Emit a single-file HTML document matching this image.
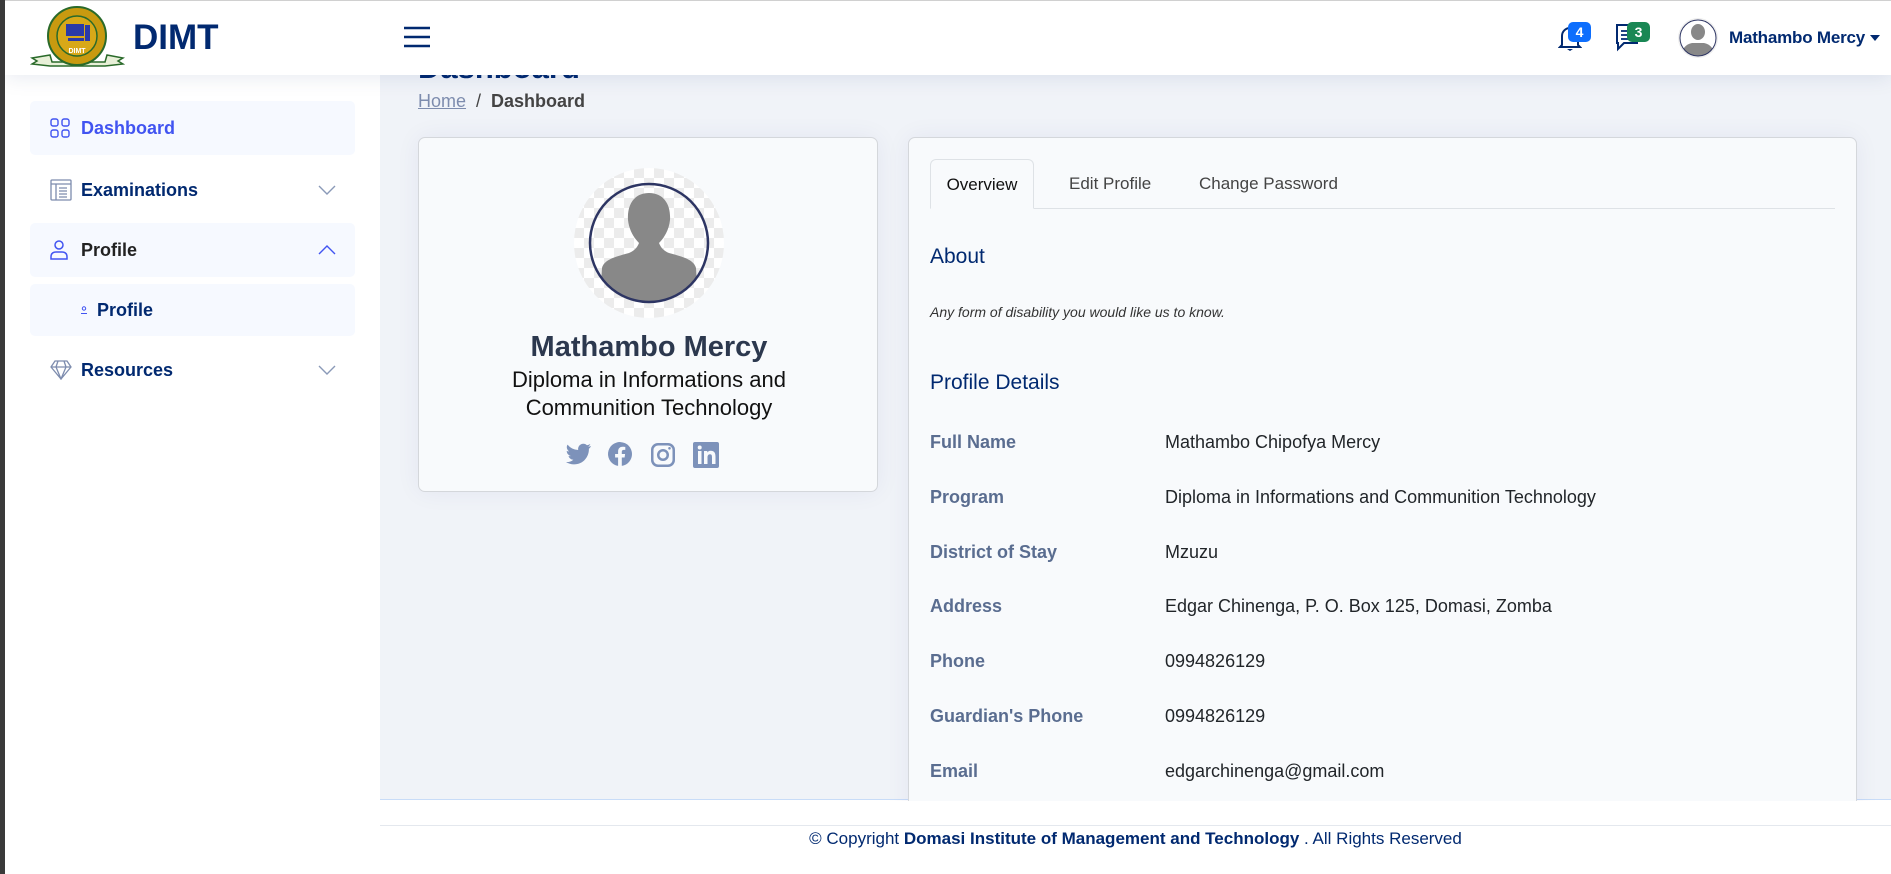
<!DOCTYPE html>
<html><head><meta charset="utf-8"><style>
*{box-sizing:border-box;margin:0;padding:0}
body{width:1891px;height:874px;overflow:hidden;background:#fff;font-family:"Liberation Sans",sans-serif;position:relative}
.edge{position:absolute;left:0;top:0;width:5px;height:874px;background:#3a3a3a;z-index:9}
.topline{position:absolute;left:0;top:0;width:1891px;height:1px;background:#d0d0d0;z-index:9}
.main{position:absolute;left:380px;top:0;width:1511px;height:800px;background:#f0f3f8;border-bottom:1px solid #c8dcf8}
.header{position:absolute;left:5px;top:1px;width:1886px;height:74px;background:#fff;box-shadow:0 2px 20px rgba(1,41,112,.1);z-index:5}
.side{position:absolute;left:5px;top:75px;width:375px;height:799px;background:#fff}
.nav{position:absolute;left:25px;width:325px;height:54px;border-radius:5px;display:flex;align-items:center;font-size:18px;font-weight:bold;color:#012970}
.nav.act{background:#f6f9ff}
.nav svg.ic{position:absolute;left:20px}
.nav span{position:absolute;left:51px}
.nav .chev{position:absolute;left:288px}
.card{position:absolute;background:#f8fafc;border:1px solid #d4d7db;border-radius:7px;box-shadow:0 0 25px rgba(1,41,112,.06)}
.lab{position:absolute;left:21px;font-size:18px;font-weight:bold;color:#5a6d90}
.val{position:absolute;left:256px;font-size:18px;color:#212529}
</style></head><body>
<div class="main">
  <div style="position:absolute;left:38px;top:50px;font-size:31px;font-weight:bold;color:#012970">Dashboard</div>
  <div style="position:absolute;left:38px;top:91px;font-size:18px;color:#444"><span style="color:#7d8cae;text-decoration:underline">Home</span>&nbsp; / &nbsp;<span style="color:#444;font-weight:bold">Dashboard</span></div>
</div>
<div class="topline"></div>
<div class="header">
  <svg style="position:absolute;left:25px;top:5px" width="95" height="62" viewBox="0 0 95 62">
    <path d="M2 52 L20 49 L22 56 L75 56 L77 49 L93 52 L88 55 L93 58 L75 60 L20 60 L2 58 L7 55Z" fill="#e8f0d8" stroke="#2a6a2a" stroke-width="1.5"/>
    <circle cx="47" cy="30" r="29" fill="#c89a10" stroke="#2a6a2a" stroke-width="2"/>
    <circle cx="47" cy="30" r="20" fill="#d8a818" stroke="#2a6a2a" stroke-width="1.5"/>
    <rect x="36" y="18" width="18" height="12" fill="#2a3aa8"/><rect x="55" y="19" width="5" height="16" fill="#2a3aa8"/><rect x="38" y="32" width="16" height="3" fill="#2a3aa8"/>
    <text x="47" y="47" font-size="7" fill="#fff" text-anchor="middle" font-weight="bold" font-family="Liberation Sans">DIMT</text>
  </svg>
  <div style="position:absolute;left:128px;top:17px;font-size:35px;font-weight:bold;color:#012970">DIMT</div>
  <svg style="position:absolute;left:398px;top:24px" width="28" height="24"><path d="M1 3H27M1 12H27M1 21H27" stroke="#012970" stroke-width="2.4"/></svg>
  <svg style="position:absolute;left:1553px;top:22px" width="24" height="30" viewBox="0 0 24 30"><path d="M4 22 V13 a8 8 0 0 1 16 0 V22 l2 2 H2Z" fill="none" stroke="#012970" stroke-width="2"/><path d="M9 26 h6 l-3 2z" fill="#012970"/></svg>
  <div style="position:absolute;left:1563px;top:21px;width:23px;height:20px;background:#0d6efd;color:#fff;border-radius:5px;font-size:14px;font-weight:bold;text-align:center;line-height:20px">4</div>
  <svg style="position:absolute;left:1610px;top:22px" width="26" height="30" viewBox="0 0 26 30"><path d="M2 2 H22 V20 H9 L3 26 V20 H2Z" fill="none" stroke="#012970" stroke-width="2"/><path d="M6 8H16M6 12H16M6 16H16" stroke="#012970" stroke-width="1.8"/></svg>
  <div style="position:absolute;left:1622px;top:21px;width:23px;height:20px;background:#198754;color:#fff;border-radius:5px;font-size:14px;font-weight:bold;text-align:center;line-height:20px">3</div>
  <svg style="position:absolute;left:1672px;top:16px" width="42" height="42" viewBox="0 0 42 42"><circle cx="21" cy="21" r="20" fill="#eee"/><circle cx="21" cy="21" r="18" fill="#fff"/><clipPath id="c1"><circle cx="21" cy="21" r="18"/></clipPath><g clip-path="url(#c1)" fill="#888"><ellipse cx="21" cy="15" rx="7" ry="8"/><path d="M4 40 Q5 28 15 26 H27 Q37 28 38 40Z"/></g><circle cx="21" cy="21" r="18" fill="none" stroke="#2d3563" stroke-width="1"/></svg>
  <div style="position:absolute;left:1724px;top:27px;font-size:17px;font-weight:bold;color:#012970;letter-spacing:-0.2px">Mathambo Mercy</div>
  <svg style="position:absolute;left:1865px;top:34px" width="10" height="6"><path d="M0 0H10L5 6Z" fill="#012970"/></svg>
</div>
<div class="edge"></div>
<div class="side">
  <div class="nav act" style="top:26px;color:#4154f1"><svg class="ic" width="20" height="20" viewBox="0 0 20 20" fill="none" stroke="#4154f1" stroke-width="1.4"><rect x="1" y="1" width="7" height="7" rx="2"/><rect x="12" y="1" width="7" height="7" rx="2"/><rect x="1" y="12" width="7" height="7" rx="2"/><rect x="12" y="12" width="7" height="7" rx="2"/></svg><span>Dashboard</span></div>
  <div class="nav" style="top:88px"><svg class="ic" width="22" height="22" viewBox="0 0 22 22" fill="none" stroke="#7d8cae" stroke-width="1.3"><rect x="1" y="1" width="20" height="20" rx="1"/><path d="M1 5H21M6 5V21M9 9H17M9 12H17M9 15H17M9 18H17"/></svg><span>Examinations</span><svg class="chev" width="18" height="10"><path d="M1 1L9 9L17 1" fill="none" stroke="#8a99b8" stroke-width="1.4"/></svg></div>
  <div class="nav act" style="top:148px"><svg class="ic" width="18" height="20" viewBox="0 0 18 20" fill="none" stroke="#4154f1" stroke-width="1.5"><circle cx="9" cy="5" r="4"/><path d="M1 19 V17 Q1 12 6 12 H12 Q17 12 17 17 V19Z"/></svg><span style="color:#222">Profile</span><svg class="chev" width="18" height="10"><path d="M1 9L9 1L17 9" fill="none" stroke="#4154f1" stroke-width="1.4"/></svg></div>
  <div class="nav act" style="top:209px;height:52px;font-size:18px"><svg style="position:absolute;left:50px" width="8" height="8" viewBox="0 0 8 8" fill="none" stroke="#4154f1"><circle cx="4" cy="2.5" r="1.7"/><path d="M1 7.5H7"/></svg><span style="left:67px">Profile</span></div>
  <div class="nav" style="top:268px"><svg class="ic" width="22" height="20" viewBox="0 0 22 20" fill="none" stroke="#7d8cae" stroke-width="1.3"><path d="M5 1H17L21 7L11 19L1 7Z M1 7H21 M8 1L6 7L11 19L16 7L14 1"/></svg><span>Resources</span><svg class="chev" width="18" height="10"><path d="M1 1L9 9L17 1" fill="none" stroke="#8a99b8" stroke-width="1.4"/></svg></div>
</div>

<div class="card" style="left:418px;top:137px;width:460px;height:355px">
  <svg style="position:absolute;left:155px;top:30px" width="150" height="150" viewBox="0 0 150 150">
    <defs><pattern id="ck" width="20" height="20" patternUnits="userSpaceOnUse"><rect width="20" height="20" fill="#fff"/><rect width="10" height="10" fill="#ececec"/><rect x="10" y="10" width="10" height="10" fill="#ececec"/></pattern><clipPath id="c2"><circle cx="75" cy="75" r="59"/></clipPath></defs>
    <circle cx="75" cy="75" r="75" fill="url(#ck)"/>
    <g clip-path="url(#c2)" fill="#888"><path d="M75 25 C90 25 97 37 96 52 C95 62 90 70 85 75 C87 80 90 83 95 85 C110 89 120 92 122 100 L125 150 H25 L28 100 C30 92 40 89 55 85 C60 83 63 80 65 75 C60 70 55 62 54 52 C53 37 60 25 75 25Z"/></g>
    <circle cx="75" cy="75" r="59" fill="none" stroke="#2d3563" stroke-width="2.5"/>
  </svg>
  <div style="position:absolute;left:0;width:460px;top:193px;text-align:center;font-size:29px;font-weight:bold;color:#2c384e">Mathambo Mercy</div>
  <div style="position:absolute;left:0;width:460px;top:228px;text-align:center;font-size:22px;line-height:28px;color:#111">Diploma in Informations and<br>Communition Technology</div>
  <svg style="position:absolute;left:147px;top:302px" width="170" height="28" viewBox="0 0 170 28" fill="#7d92ba">
    <path d="M25 6 c-1 .4-2 .7-3 .8 1-.6 1.9-1.6 2.3-2.8-1 .6-2.1 1-3.3 1.3A5.2 5.2 0 0 0 12.2 10 14.7 14.7 0 0 1 1.5 4.6a5.2 5.2 0 0 0 1.6 6.9c-.9 0-1.7-.3-2.4-.6 0 2.5 1.8 4.6 4.2 5.1-.8.2-1.6.2-2.4.1.7 2 2.6 3.6 4.9 3.6A10.4 10.4 0 0 1 0 22 14.7 14.7 0 0 0 8 24.4c9.6 0 14.9-8 14.9-14.9v-.7C24 8 24.6 7 25 6z"/>
    <g transform="translate(5,0)"><path d="M61 14a12 12 0 1 0-13.9 11.9v-8.4h-3V14h3v-2.6c0-3 1.8-4.7 4.5-4.7 1.3 0 2.7.2 2.7.2v3h-1.5c-1.5 0-2 .9-2 1.9V14h3.3l-.5 3.5h-2.8v8.4A12 12 0 0 0 61 14z"/></g>
    <g transform="translate(10,0)"><path d="M82 3h10a7 7 0 0 1 7 7v10a7 7 0 0 1-7 7H82a7 7 0 0 1-7-7V10a7 7 0 0 1 7-7zm0 2.5a4.5 4.5 0 0 0-4.5 4.5v10a4.5 4.5 0 0 0 4.5 4.5h10a4.5 4.5 0 0 0 4.5-4.5V10A4.5 4.5 0 0 0 92 5.5zM87 9a6 6 0 1 1 0 12 6 6 0 0 1 0-12zm0 2.5a3.5 3.5 0 1 0 0 7 3.5 3.5 0 0 0 0-7zM93.5 7a1.3 1.3 0 1 1 0 2.6 1.3 1.3 0 0 1 0-2.6z"/></g>
    <g transform="translate(17,0)"><path d="M112 2h22a2 2 0 0 1 2 2v22a2 2 0 0 1-2 2h-22a2 2 0 0 1-2-2V4a2 2 0 0 1 2-2zm3 9v13h3.5V11zm1.7-5.5a2 2 0 1 0 0 4 2 2 0 0 0 0-4zM121 11v13h3.5v-6.5c0-1.8.6-3.3 2.5-3.3s2 1.6 2 3.4V24h3.5v-7.2c0-3.6-.9-6.1-4.8-6.1-1.9 0-3 1-3.4 1.9V11z" fill-rule="evenodd"/></g>
  </svg>
</div>

<div class="card" style="left:908px;top:137px;width:949px;height:700px">
  <div style="position:absolute;left:21px;right:21px;top:70px;border-bottom:1px solid #dee2e6"></div>
  <div style="position:absolute;left:21px;top:21px;width:104px;height:50px;border:1px solid #dee2e6;border-bottom:1px solid #f8fafc;border-radius:6px 6px 0 0;background:#f8fafc;font-size:17px;color:#111;text-align:center;line-height:50px">Overview</div>
  <div style="position:absolute;left:160px;top:36px;font-size:17px;color:#444">Edit Profile</div>
  <div style="position:absolute;left:290px;top:36px;font-size:17px;color:#444">Change Password</div>
  <div style="position:absolute;left:21px;top:107px;font-size:21px;color:#012970">About</div>
  <div style="position:absolute;left:21px;top:166px;font-size:14px;font-style:italic;color:#333">Any form of disability you would like us to know.</div>
  <div style="position:absolute;left:21px;top:233px;font-size:21px;color:#012970">Profile Details</div>
  <div class="lab" style="top:294px">Full Name</div><div class="val" style="top:294px">Mathambo Chipofya Mercy</div>
  <div class="lab" style="top:349px">Program</div><div class="val" style="top:349px">Diploma in Informations and Communition Technology</div>
  <div class="lab" style="top:404px">District of Stay</div><div class="val" style="top:404px">Mzuzu</div>
  <div class="lab" style="top:458px">Address</div><div class="val" style="top:458px">Edgar Chinenga, P. O. Box 125, Domasi, Zomba</div>
  <div class="lab" style="top:513px">Phone</div><div class="val" style="top:513px">0994826129</div>
  <div class="lab" style="top:568px">Guardian's Phone</div><div class="val" style="top:568px">0994826129</div>
  <div class="lab" style="top:623px">Email</div><div class="val" style="top:623px">edgarchinenga@gmail.com</div>
</div>
<div style="position:absolute;left:380px;top:801px;width:1511px;height:73px;background:#fff;z-index:3">
  <div style="position:absolute;left:0;right:0;top:24px;border-top:1px solid #e4e8ee"></div>
  <div style="position:absolute;left:0;width:1511px;top:28px;text-align:center;font-size:17px;color:#012970">© Copyright <b>Domasi Institute of Management and Technology</b> . All Rights Reserved</div>
</div>
</body></html>
